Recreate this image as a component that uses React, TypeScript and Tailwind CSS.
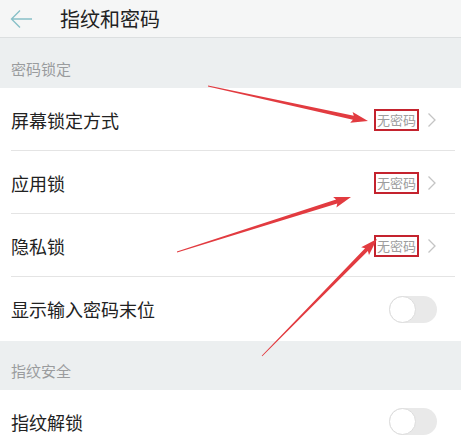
import React from "react";

const font = { fontFamily: '"Noto Sans CJK SC", "Noto Sans", sans-serif' };

type Arrow = { x1: number; y1: number; x2: number; y2: number };

const arrows: Arrow[] = [
  { x1: 208, y1: 86, x2: 368, y2: 121 },
  { x1: 177, y1: 252, x2: 351, y2: 197 },
  { x1: 262, y1: 356, x2: 377, y2: 239 },
];

// tapered shaft with a triangular head, like a marker annotation
function arrowPoints({ x1, y1, x2, y2 }: Arrow) {
  const dx = x2 - x1;
  const dy = y2 - y1;
  const len = Math.hypot(dx, dy);
  const ux = dx / len;
  const uy = dy / len;
  const nx = -uy;
  const ny = ux;
  const headLen = 15;
  const bx = x2 - ux * headLen;
  const by = y2 - uy * headLen;
  const p = (x: number, y: number) => `${x.toFixed(1)},${y.toFixed(1)}`;
  return [
    p(x1 + nx * 0.4, y1 + ny * 0.4),
    p(bx + nx * 2, by + ny * 2),
    p(bx + nx * 5.5 - ux * 2, by + ny * 5.5 - uy * 2),
    p(x2, y2),
    p(bx - nx * 5.5 - ux * 2, by - ny * 5.5 - uy * 2),
    p(bx - nx * 2, by - ny * 2),
    p(x1 - nx * 0.4, y1 - ny * 0.4),
  ].join(" ");
}

const SectionHeader = ({ title, height }: { title: string; height: string }) => (
  <div className={`flex items-end bg-[#eceff0] px-[11px] pb-[9px] ${height}`}>
    <span className="text-[15px] leading-5 text-[#9a9c9e]">{title}</span>
  </div>
);

const Chevron = () => (
  <svg width="10" height="16" viewBox="0 0 10 16" className="ml-[8px]">
    <path d="M1.5 1.5 L8 8 L1.5 14.5" fill="none" stroke="#c4c4c4" strokeWidth="1.3" />
  </svg>
);

const Toggle = () => (
  <div className="relative h-[27px] w-[48px] rounded-full bg-[#e9e9e9]">
    <div className="absolute left-0 top-0 h-[27px] w-[27px] rounded-full border border-[#dcdcdc] bg-white" />
  </div>
);

const Row = ({
  label,
  right,
  divider = true,
  height = "h-[63px]",
}: {
  label: string;
  right: React.ReactNode;
  divider?: boolean;
  height?: string;
}) => (
  <div className={`flex items-center bg-white pl-[11px] pr-[24px] ${height} ${divider ? "relative" : ""}`}>
    <span className="flex-1 text-[18px] leading-6 text-[#222]">{label}</span>
    {right}
    {divider && <div className="absolute bottom-0 left-[11px] right-[6px] h-px bg-[#e4e4e4]" />}
  </div>
);

const NoPassword = () => (
  <div className="flex items-center">
    <span className="border-2 border-[#c4232e] px-[1px] text-[13px] leading-[18px] text-[#9d9d9d]">无密码</span>
    <Chevron />
  </div>
);

export default function App() {
  return (
    <div className="relative h-[440px] w-[461px] overflow-hidden bg-white" style={font}>
      <header className="flex h-[38px] items-center border-b border-[#dcdfe0] bg-[#f5f6f6]">
        <svg width="26" height="22" viewBox="0 0 26 22" className="ml-[8px]">
          <path d="M24 11 H4 M12 2.5 L3.5 11 L12 19.5" fill="none" stroke="#88c0c8" strokeWidth="1.4" />
        </svg>
        <h1 className="ml-[26px] text-[20px] leading-7 text-[#222]">指纹和密码</h1>
      </header>

      <SectionHeader title="密码锁定" height="h-[50px]" />
      <Row label="屏幕锁定方式" right={<NoPassword />} />
      <Row label="应用锁" right={<NoPassword />} />
      <Row label="隐私锁" right={<NoPassword />} />
      <Row label="显示输入密码末位" right={<Toggle />} divider={false} height="h-[64px]" />

      <SectionHeader title="指纹安全" height="h-[49px]" />
      <Row label="指纹解锁" right={<Toggle />} divider={false} />

      <svg className="pointer-events-none absolute left-0 top-0" width="461" height="440">
        {arrows.map((a, i) => (
          <polygon key={i} points={arrowPoints(a)} fill="#e23b40" />
        ))}
      </svg>
    </div>
  );
}
